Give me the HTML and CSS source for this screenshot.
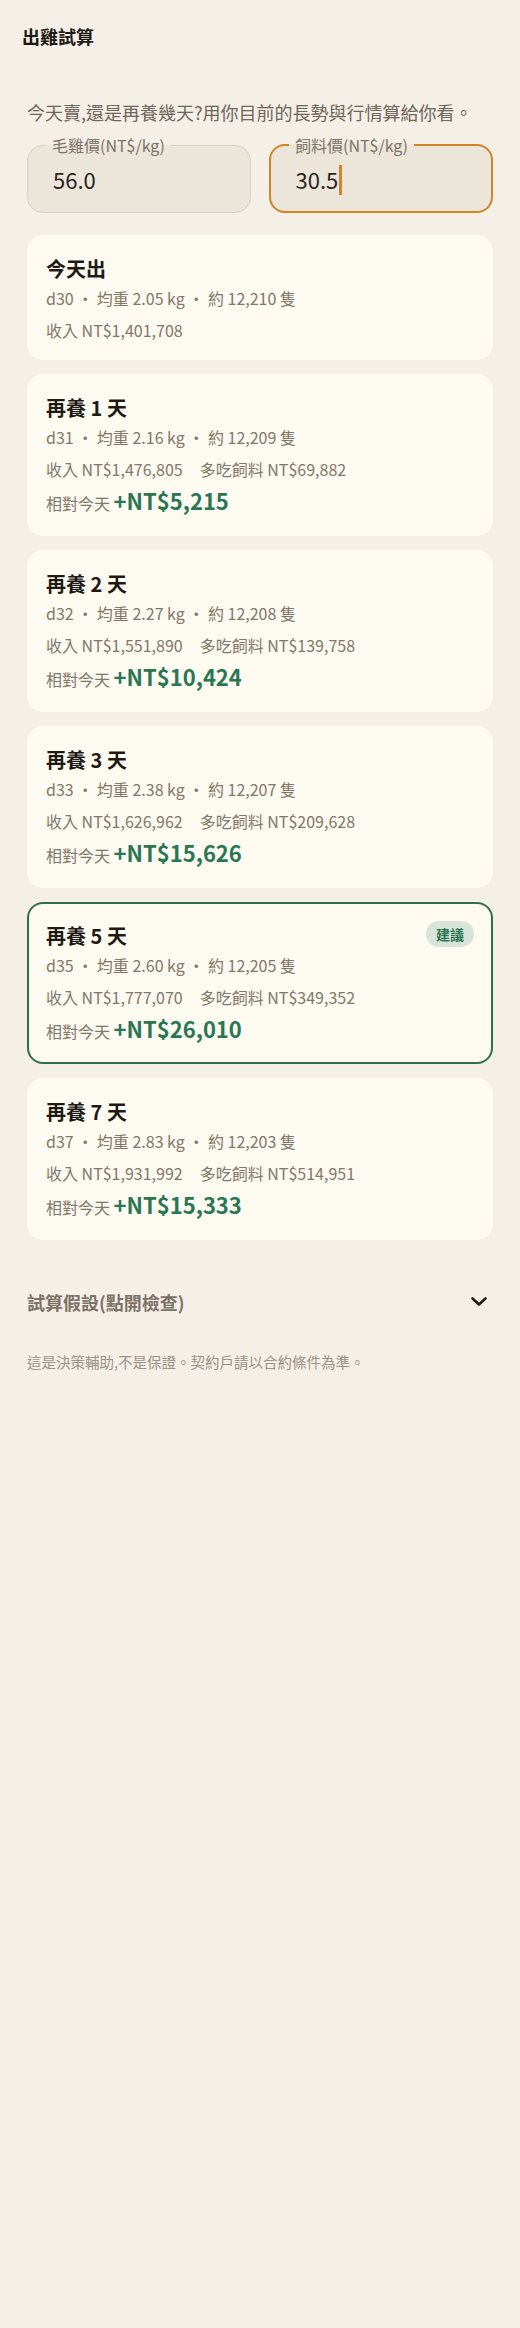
FILE: index.html
```html
<!DOCTYPE html>
<html lang="zh-Hant">
<head>
    <meta charset="UTF-8">
    <meta name="viewport" content="width=device-width, initial-scale=1.0">
    <title>出雞試算</title>
    <link rel="stylesheet" href="styles.css">
</head>
<body>
    <header class="top-bar">
        <h1>出雞試算</h1>
    </header>

    <main class="page">
        <p class="intro">今天賣,還是再養幾天?用你目前的長勢與行情算給你看。</p>

        <div class="price-inputs">
            <fieldset class="price-field">
                <legend>毛雞價(NT$/kg)</legend>
                <div class="price-value">56.0</div>
            </fieldset>
            <fieldset class="price-field focused">
                <legend>飼料價(NT$/kg)</legend>
                <div class="price-value">30.5<span class="caret"></span></div>
            </fieldset>
        </div>

        <div class="options">
            <div class="option">
                <div class="option-head">
                    <h2>今天出</h2>
                </div>
                <div class="meta">d30 ・ 均重 2.05 kg ・ 約 12,210 隻</div>
                <div class="money">
                    <span>收入 NT$1,401,708</span>
                </div>
            </div>

            <div class="option">
                <div class="option-head">
                    <h2>再養 1 天</h2>
                </div>
                <div class="meta">d31 ・ 均重 2.16 kg ・ 約 12,209 隻</div>
                <div class="money">
                    <span>收入 NT$1,476,805</span>
                    <span>多吃飼料 NT$69,882</span>
                </div>
                <div class="diff">相對今天 <strong>+NT$5,215</strong></div>
            </div>

            <div class="option">
                <div class="option-head">
                    <h2>再養 2 天</h2>
                </div>
                <div class="meta">d32 ・ 均重 2.27 kg ・ 約 12,208 隻</div>
                <div class="money">
                    <span>收入 NT$1,551,890</span>
                    <span>多吃飼料 NT$139,758</span>
                </div>
                <div class="diff">相對今天 <strong>+NT$10,424</strong></div>
            </div>

            <div class="option">
                <div class="option-head">
                    <h2>再養 3 天</h2>
                </div>
                <div class="meta">d33 ・ 均重 2.38 kg ・ 約 12,207 隻</div>
                <div class="money">
                    <span>收入 NT$1,626,962</span>
                    <span>多吃飼料 NT$209,628</span>
                </div>
                <div class="diff">相對今天 <strong>+NT$15,626</strong></div>
            </div>

            <div class="option recommended">
                <div class="option-head">
                    <h2>再養 5 天</h2>
                    <span class="badge">建議</span>
                </div>
                <div class="meta">d35 ・ 均重 2.60 kg ・ 約 12,205 隻</div>
                <div class="money">
                    <span>收入 NT$1,777,070</span>
                    <span>多吃飼料 NT$349,352</span>
                </div>
                <div class="diff">相對今天 <strong>+NT$26,010</strong></div>
            </div>

            <div class="option">
                <div class="option-head">
                    <h2>再養 7 天</h2>
                </div>
                <div class="meta">d37 ・ 均重 2.83 kg ・ 約 12,203 隻</div>
                <div class="money">
                    <span>收入 NT$1,931,992</span>
                    <span>多吃飼料 NT$514,951</span>
                </div>
                <div class="diff">相對今天 <strong>+NT$15,333</strong></div>
            </div>
        </div>

        <div class="assumptions">
            <span>試算假設(點開檢查)</span>
            <svg class="chevron" width="18" height="12" viewBox="0 0 18 12">
                <polyline points="2.5,2.5 9,8.5 15.5,2.5" fill="none" stroke="#1f1a14" stroke-width="2.6" stroke-linecap="round" stroke-linejoin="round"/>
            </svg>
        </div>

        <p class="disclaimer">這是決策輔助,不是保證。契約戶請以合約條件為準。</p>
    </main>
</body>
</html>
```

FILE: styles.css
```css
body {
    background-color: #f4f0e8;
    font-family: "Noto Sans CJK TC", "Noto Sans", sans-serif;
    color: #1f1a14;
    margin: 0;
    padding: 0;
}
.top-bar {
    padding: 24px 22px 0;
}
.top-bar h1 {
    margin: 0;
    font-size: 18px;
    line-height: 24px;
    font-weight: 700;
}
.page {
    padding: 0 27px 40px;
}
.intro {
    margin: 51px 0 0;
    font-size: 18px;
    line-height: 26px;
    color: #6f655b;
}
.price-inputs {
    display: grid;
    grid-template-columns: 1fr 1fr;
    gap: 18px;
    margin-top: 10px;
}
.price-field {
    margin: 0;
    min-width: 0;
    padding: 0 18px 16px;
    border: 1.5px solid #d9d1c3;
    border-radius: 16px;
    background-color: #ece6da;
}
.price-field legend {
    padding: 0 6px;
    font-size: 16px;
    line-height: 20px;
    color: #7d7368;
}
.price-field.focused {
    border: 2px solid #cf8426;
}
.price-value {
    margin-top: 8px;
    padding-left: 7px;
    font-size: 22px;
    line-height: 32px;
    color: #2a241e;
}
.focused .price-value {
    padding-left: 6.5px;
}
.caret {
    display: inline-block;
    width: 2.5px;
    height: 30px;
    margin-left: 1px;
    vertical-align: -6px;
    background-color: #cf8426;
}
.options {
    display: flex;
    flex-direction: column;
    gap: 14px;
    margin-top: 22px;
}
.option {
    padding: 18px 17px 14px;
    background-color: #fdfaf2;
    border: 2px solid #fdfaf2;
    border-radius: 16px;
}
.option.recommended {
    border-color: #2f6f50;
}
.option-head {
    display: flex;
    justify-content: space-between;
    align-items: center;
}
.option h2 {
    margin: 0;
    font-size: 20px;
    line-height: 28px;
    font-weight: 700;
}
.meta {
    margin-top: 1px;
    font-size: 16px;
    line-height: 28px;
    color: #837769;
}
.money {
    display: flex;
    gap: 17px;
    margin-top: 4px;
    font-size: 16px;
    line-height: 28px;
    color: #837769;
}
.diff {
    margin-top: 3px;
    font-size: 16px;
    line-height: 34px;
    color: #837769;
}
.diff strong {
    font-size: 22px;
    line-height: 1;
    font-weight: 700;
    color: #2a7653;
}
.badge {
    margin-top: -4px;
    padding: 0 10px;
    font-size: 14px;
    line-height: 26px;
    font-weight: 700;
    color: #2a7653;
    background-color: #d8e4da;
    border-radius: 13px;
}
.assumptions {
    display: flex;
    justify-content: space-between;
    align-items: center;
    margin-top: 49px;
    padding-right: 5px;
    font-size: 18px;
    line-height: 26px;
    font-weight: 700;
    color: #7d7267;
}
.disclaimer {
    margin: 36px 0 0;
    font-size: 14.5px;
    line-height: 22px;
    color: #9b9188;
}
```
